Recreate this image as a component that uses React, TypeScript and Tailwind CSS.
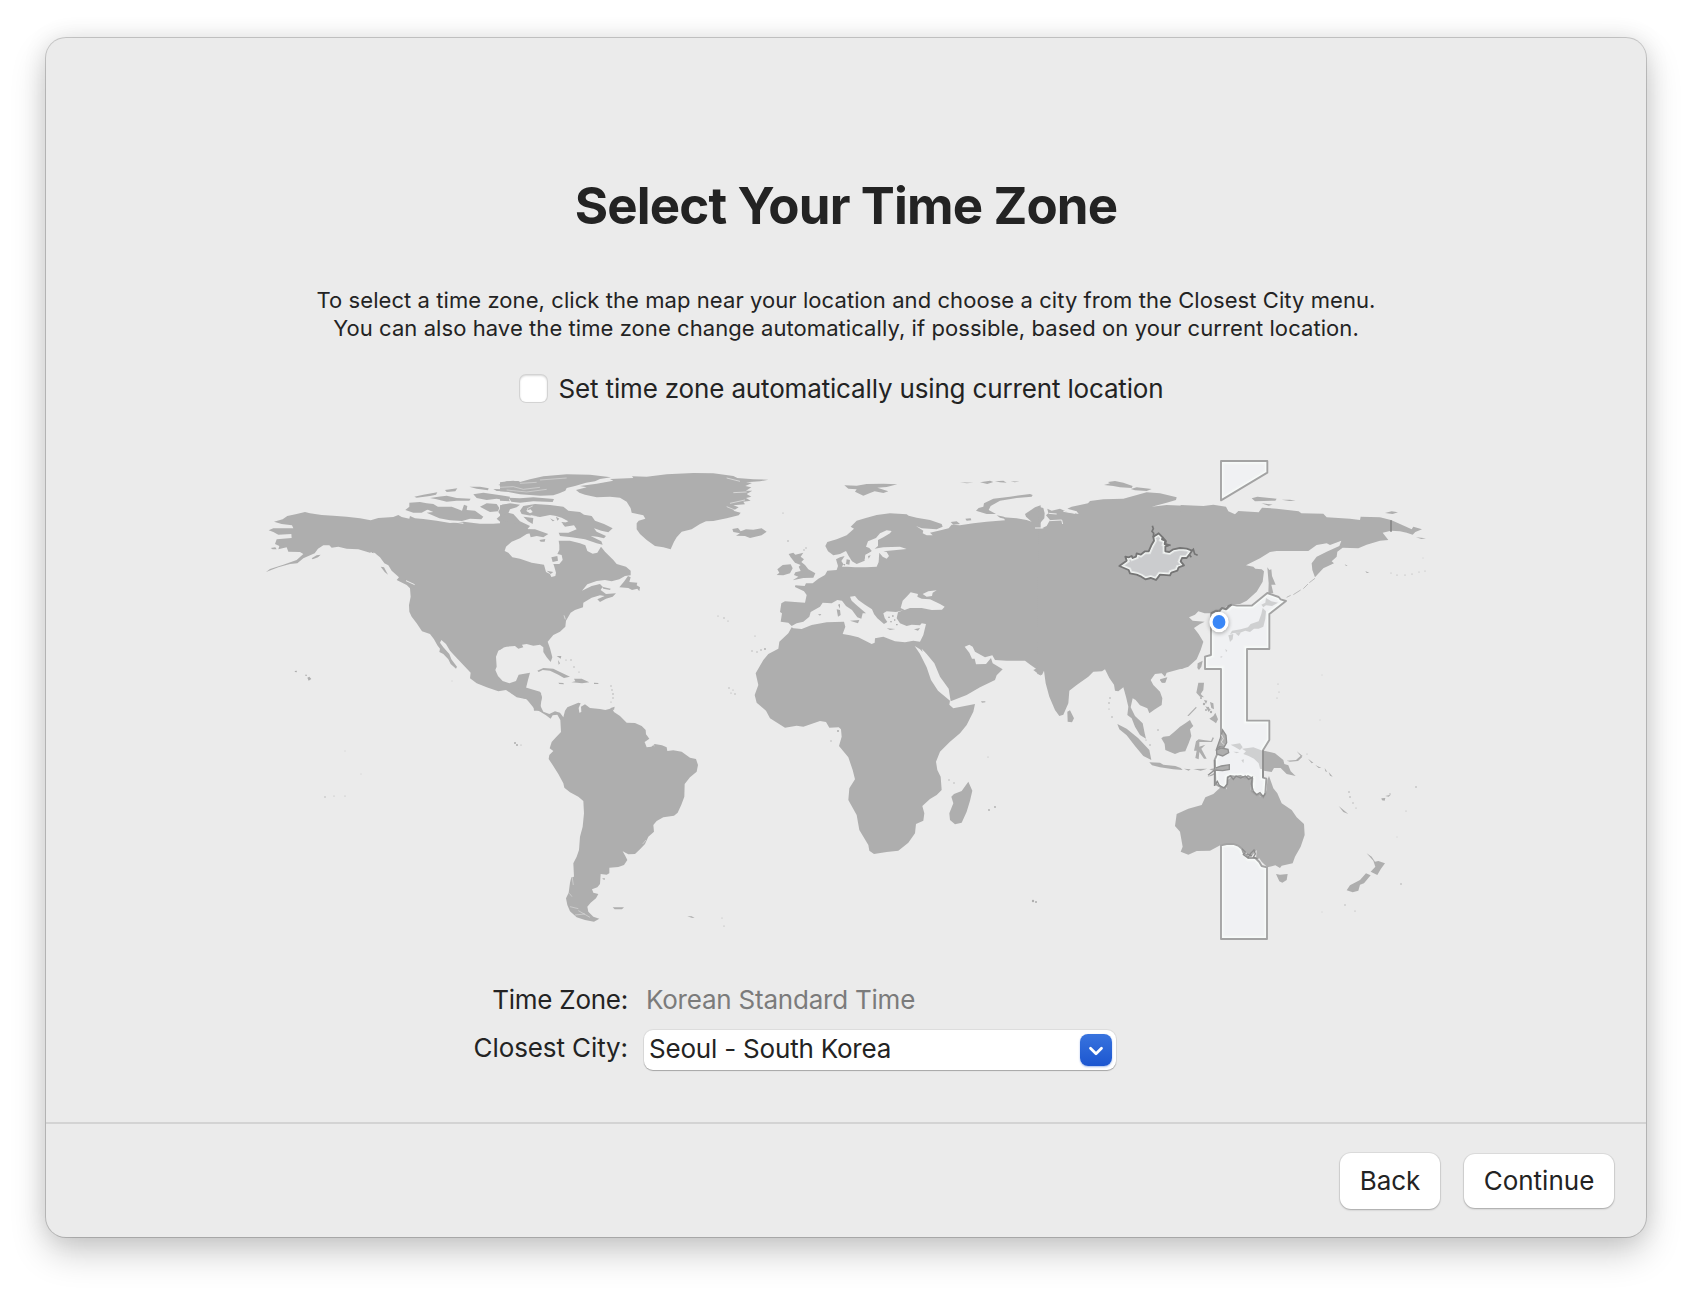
import { ChevronDown } from "lucide-react";

const LAND = "#aeaeae";
const SEA = "#ebebeb";

/* Every group below is drawn in thirds of a map pixel. */
const alaskaToMexico =
  "M72,215 98,208 112,198 140,192 165,186 180,190 215,195 250,197 290,200 330,205 362,211 385,204 430,201 445,195 455,201 478,206 480,198 495,205 520,207 560,212 600,219 640,215 690,221 730,221 760,219 760,594 745,602 738,620 740,650 736,660 744,678 758,693 778,700 798,693 806,674 840,668 834,690 826,722 850,722 873,728 875,745 870,782 852,782 850,765 830,748 800,742 768,720 745,724 710,712 680,700 660,685 662,668 640,645 618,622 600,602 588,582 574,570 570,578 580,592 598,612 604,628 621,650 618,656 602,642 595,628 580,612 568,606 570,596 562,586 552,568 540,552 516,544 500,520 485,500 478,485 477,465 482,440 480,415 470,405 440,390 447,382 425,362 415,346 403,340 390,322 375,310 360,308 325,298 290,296 265,290 245,293 238,286 220,286 204,296 194,310 160,325 142,340 120,342 85,352 48,366 60,357 100,344 140,330 160,312 150,306 115,305 110,292 85,298 88,288 75,282 80,268 125,264 124,252 85,254 70,246 56,241 70,235 130,235 126,226 95,222Z";
const arcticWest =
  "M478,158 510,156 530,160 550,162 566,172 530,180 515,188 490,188 466,180 478,170ZM530,178 560,170 605,170 636,182 642,164 652,168 650,180 675,182 700,200 694,208 660,206 636,213 600,211 568,205 530,188 550,186ZM493,140 520,134 562,127 558,134 540,138 500,143ZM540,144 565,140 590,137 620,144 662,146 658,152 620,152 590,155 560,148ZM585,120 622,115 616,124 590,126ZM658,110 690,110 716,115 714,121 680,116ZM745,105 770,94 805,93 824,104 800,115 770,110ZM690,170 710,160 740,162 748,174 744,184 720,186 708,180ZM756,164 780,162 782,172 762,186 790,192 810,214 840,228 830,240 790,225 760,224 740,206 752,196 745,186ZM670,133 700,128 752,136 780,140 776,152 740,146 710,150 680,144ZM730,117 762,118 770,124 740,123ZM185,325 200,316 212,314 204,322 188,328ZM392,350 402,352 414,374 404,366ZM466,388 494,408 492,414 472,402ZM62,294 76,292 80,298 68,298ZM172,683 178,680 184,687 176,692ZM165,674 171,674 171,677 166,677ZM134,663 141,662 140,667 135,666Z";
const labradorToFlorida =
  "M0,216 10,210 40,222 60,220 85,238 100,240 98,248 80,252 60,265 35,275 18,290 14,303 25,308 37,322 60,326 95,338 132,344 138,366 150,372 154,381 166,378 168,368 163,350 160,342 178,342 188,330 185,315 172,312 178,300 178,285 176,272 210,272 240,280 256,286 262,303 278,311 292,308 303,290 315,305 340,330 350,342 378,350 392,362 392,376 375,378 358,388 335,394 315,390 290,393 262,403 246,422 275,408 300,402 308,410 302,420 318,432 348,430 338,440 318,446 300,456 292,448 314,438 300,436 275,443 250,458 249,472 225,480 212,488 205,500 198,512 196,530 180,545 160,555 143,575 150,595 157,622 152,636 140,622 130,606 130,592 120,584 100,587 80,582 66,584 70,592 55,596 45,588 20,590 5,594 0,600Z";
const baffinGreenland =
  "M60,182 70,168 105,162 150,165 190,170 205,182 240,186 252,194 275,198 285,212 312,222 338,235 325,247 304,242 282,235 290,245 318,258 312,265 292,260 272,258 304,274 308,284 290,280 255,268 215,262 180,258 176,248 205,248 230,238 222,226 195,230 188,222 205,214 185,203 165,197 150,195 120,201 85,196 65,192ZM92,178 78,182 90,190 98,186ZM0,97 40,92 60,96 90,88 130,79 200,73 270,74 333,82 300,87 285,94 258,98 225,108 200,114 196,122 178,130 160,136 120,137 60,133 25,126 0,124ZM26,143 60,145 100,142 162,147 158,156 100,154 60,158 34,155ZM0,140 22,142 30,154 0,152ZM0,166 30,160 60,164 50,172 30,178 25,190 0,200ZM70,200 100,204 98,222 84,214ZM85,238 105,238 145,252 130,262 110,258 92,262ZM118,270 136,267 134,275 122,275ZM184,216 210,218 214,224 192,226ZM228,120 260,112 240,108 290,101 340,92 330,87 400,84 396,79 440,80 500,73 580,69 640,70 700,78 712,84 760,88 805,89 780,94 738,97 756,99 736,108 754,112 738,122 757,122 740,132 754,140 738,144 752,152 730,155 735,163 700,166 716,172 700,182 722,188 716,196 680,205 640,213 618,214 600,222 575,238 545,245 530,262 522,275 512,298 490,292 465,288 440,270 420,252 410,238 410,220 416,212 436,206 430,196 395,188 392,175 380,155 360,143 330,140 290,142 255,134 238,128ZM697,237 714,234 722,244 738,238 760,239 785,235 800,245 785,256 750,264 735,258 708,257 720,250 700,246ZM384,378 374,392 358,412 385,414 396,420 412,416 418,424 420,412 410,406 412,398 388,396 392,382ZM112,662 130,654 160,656 180,666 210,680 192,684 175,674 150,662 128,660 116,666ZM214,697 226,694 222,686 245,686 268,697 246,700 232,698ZM175,698 190,699 192,703 178,702ZM282,698 296,699 294,702 282,702ZM170,618 184,618 182,626ZM174,630 180,640 176,644Z";
const europe =
  "M155,528 145,518 122,515 126,490 120,486 124,460 135,454 195,458 200,435 192,424 165,411 166,406 194,408 198,400 218,400 235,386 255,375 262,362 290,360 294,348 288,328 300,322 314,318 304,333 310,342 306,350 322,350 345,352 378,352 410,350 416,336 414,312 400,300 376,318 374,332 350,342 336,334 326,318 318,303 300,312 280,316 264,304 256,288 262,276 290,268 320,256 342,236 332,230 350,212 375,205 410,195 450,190 500,193 506,197 530,203 570,210 605,222 608,230 590,238 545,235 528,228 550,242 548,250 560,256 578,256 570,248 605,240 626,235 635,224 660,226 700,220 740,215 795,211 790,202 830,205 860,210 875,215 858,200 855,192 885,172 902,166 902,677 880,660 888,656 872,645 855,632 800,632 765,630 757,616 735,622 705,605 698,590 688,584 674,590 688,608 696,626 704,626 708,643 738,642 753,624 758,640 788,658 770,676 765,690 745,700 720,712 680,735 632,754 626,716 600,680 583,640 560,612 545,596 548,606 540,598 524,588 540,612 560,652 573,690 594,722 630,752 628,764 640,775 705,762 700,785 680,825 660,850 630,875 600,905 588,935 592,960 602,980 605,1020 590,1035 570,1047 547,1068 553,1090 550,1112 528,1122 525,1150 505,1178 475,1202 440,1206 402,1212 388,1202 385,1185 358,1140 350,1095 325,1050 328,1015 345,988 338,960 325,922 297,888 305,860 303,838 296,832 268,833 258,816 240,813 190,830 170,827 135,833 90,805 78,782 50,758 44,735 55,705 47,670 70,630 85,612 115,596 118,575 145,550 155,532 160,535 185,537 215,525 260,517 312,515 316,530 308,552 330,556 355,562 395,582 404,578 405,565 430,560 465,574 495,577 520,572 540,575 550,555 558,522 545,520 540,526 515,524 500,528 480,520 470,505 474,487 490,481 482,470 488,452 502,438 512,426 535,432 530,440 560,446 590,456 612,472 600,480 570,480 540,474 510,474 490,481 468,486 440,484 430,490 434,504 442,516 432,522 412,505 402,492 396,478 375,464 355,450 345,438 330,440 335,452 350,466 378,490 368,490 364,506 352,502 336,480 318,468 306,452 292,450 275,460 248,458 240,470 212,486 208,500 190,515 170,520Z";
const europeIsles =
  "M110,375 118,368 112,358 128,345 152,343 158,355 150,370 130,376ZM146,312 160,308 166,314 190,308 182,320 192,328 184,336 195,345 205,358 226,370 220,383 190,384 158,391 175,380 162,375 166,367 182,363 176,350 182,345 165,338 152,322ZM290,478 300,480 302,495 294,500ZM294,464 300,462 300,476ZM330,512 358,510 354,520ZM440,535 466,537 450,540ZM522,538 540,534 534,542ZM234,493 244,492 240,497ZM313,106 350,107 380,102 430,101 472,103 440,111 412,113 445,124 430,129 404,124 392,128 370,137 345,125 350,118 325,116ZM708,182 716,174 730,170 732,160 760,146 810,140 870,132 878,135 875,140 830,144 780,152 752,168 746,180 768,192 740,192ZM770,196 792,200 800,208 780,203ZM676,206 692,205 694,211 680,212ZM632,216 650,214 660,222 640,224ZM440,314 444,322 432,322 426,314ZM685,995 697,1022 690,1052 680,1085 665,1118 645,1123 630,1110 628,1090 640,1060 634,1040 642,1032 665,1023ZM723,754 736,754 736,757 726,758Z";
const asia =
  "M175,170 190,174 194,190 193,205 178,222 165,232 185,235 200,228 210,210 198,196 205,190 202,176 215,182 240,176 262,186 296,192 290,184 262,176 275,170 300,165 324,160 330,153 370,148 430,146 500,127 540,130 590,142 588,150 560,158 515,170 560,165 612,167 612,654 590,660 560,668 555,680 545,670 525,672 512,690 520,705 540,725 547,745 545,765 525,778 508,790 502,775 480,766 467,750 458,745 452,772 465,798 488,820 494,850 498,866 480,855 465,830 455,805 442,795 445,770 438,740 430,712 415,724 405,722 402,704 388,684 375,658 366,664 340,665 325,680 290,705 268,722 265,760 250,794 238,798 225,780 208,740 197,700 192,662 186,675 172,672Z";
const asiaIsles =
  "M372,105 390,100 384,96 405,93 430,98 458,108 455,114 420,112 400,108ZM452,117 470,112 515,117 500,123 465,121ZM540,688 562,682 556,698 544,697ZM653,640 668,632 664,650 657,660 652,654ZM262,785 270,781 282,805 276,817 263,815ZM412,822 440,836 475,865 508,900 514,930 490,918 465,888 440,856 418,838Z";
const siberia =
  "M2,165 70,168 100,164 138,170 145,184 165,193 175,183 236,187 246,173 290,176 356,184 364,190 430,191 440,202 510,206 540,210 542,200 600,202 633,210 660,222 695,238 700,230 726,238 706,246 698,254 680,248 660,244 633,242 608,248 625,270 600,272 560,284 535,295 488,293 472,305 470,320 455,334 462,340 430,355 405,382 397,360 395,340 410,320 440,305 478,288 484,272 450,285 440,280 410,285 385,303 340,303 290,303 270,306 240,325 198,346 220,350 226,356 245,358 252,364 248,395 230,425 200,452 180,462 150,464 125,478 95,490 74,490 55,484 45,494 27,502 38,512 74,515 60,522 42,534 56,552 70,575 62,600 50,628 25,650 2,658ZM262,352 268,360 274,358 276,378 287,404 274,404 280,430 265,430 266,400ZM215,145 232,140 290,146 286,152 225,154ZM305,149 330,149 347,152 328,153ZM244,160 278,164 266,167ZM615,189 635,184 654,187 638,192ZM708,262 738,265 724,267ZM494,343 503,347 498,348ZM556,363 568,369 560,369Z";
const oceania =
  "M272,322 290,328 294,300 302,292 340,290 365,295 362,330 380,345 402,353 410,330 412,300 417,288 430,325 442,340 455,370 485,390 500,412 522,432 524,465 512,500 495,530 488,550 455,557 450,564 436,556 412,562 395,545 388,535 378,540 380,510 362,532 345,515 325,498 300,490 272,495 240,512 200,513 175,524 152,515 158,500 150,455 135,438 140,402 175,386 215,375 226,352 250,342ZM438,582 450,584 473,582 470,600 457,608 448,604ZM710,520 725,530 735,545 745,543 765,550 752,568 742,585 722,575 736,560 730,542ZM708,580 722,586 702,610 690,614 685,632 668,637 650,631 660,616 690,600ZM402,212 435,220 460,240 463,252 475,256 482,274 497,288 470,282 452,264 432,264 425,276 402,272ZM470,242 498,240 514,226 516,232 504,243 480,245ZM500,214 518,228 514,230ZM626,378 655,402 640,396ZM534,236 550,248 545,250ZM556,255 574,264 566,264ZM584,264 592,276 586,274ZM596,276 608,290 600,287ZM754,355 766,354 764,362 756,361ZM766,348 782,344 776,350ZM94,175 100,170 118,168 135,154 150,140 166,130 180,120 186,132 190,138 180,148 184,168 176,190 166,214 150,216 135,222 106,210 104,192ZM58,247 90,248 100,254 136,258 152,264 158,270 130,268 90,262 66,256ZM162,266 182,268 176,272ZM190,267 232,266 212,272ZM238,268 256,264 250,272ZM232,290 262,274 266,278 244,288ZM205,8 222,8 220,30 212,42 222,52 210,50 199,38ZM238,116 250,108 256,98 264,118 258,130 250,124ZM226,78 242,88 236,96ZM240,66 250,70 252,88 244,84ZM222,60 232,62 228,72ZM172,107 198,80 200,83 176,108ZM198,184 206,178 220,180 243,183 248,172 252,174 246,186 222,186 208,186 208,200 226,194 214,206 230,236 222,236 208,216 206,238 196,234 200,212 192,212ZM90,0 108,0 104,8 96,8Z";
const southAmerica =
  "M40,140 90,155 96,172 90,195 100,215 118,222 135,214 150,218 160,232 165,212 172,202 205,188 212,190 206,204 208,218 214,216 213,200 225,193 240,204 270,207 286,210 306,205 312,216 330,228 350,248 375,249 395,258 407,270 408,283 418,296 404,306 410,322 424,320 434,312 456,316 470,322 472,333 490,331 515,335 540,353 558,357 564,375 560,395 540,412 524,432 523,470 514,494 503,518 492,527 460,532 440,543 430,555 432,575 415,590 405,612 390,628 375,642 355,643 338,634 346,648 352,660 342,675 325,681 298,683 298,700 290,704 272,702 270,732 262,742 246,748 250,758 265,762 258,775 242,788 232,800 235,815 250,830 268,836 252,845 225,840 200,832 180,814 172,795 168,775 176,758 180,728 184,712 192,710 190,670 200,650 207,630 210,590 218,560 222,520 220,483 205,470 180,457 163,443 160,430 145,402 128,375 116,357 118,345 130,333 119,325 125,306 138,292 153,276 151,240 142,224 128,226 122,236 108,226 92,216 72,205 50,178 20,168 2,158ZM308,802 322,802 342,802 336,808 314,808ZM532,829 545,829 554,834 545,833ZM276,716 284,714 284,720ZM300,205 314,200 312,210Z";

const zoneTop = "M123,33 262,33 262,68 123,151Z";
const zoneMain =
  "M93,490 115,480 130,474 142,476 155,464 171,467 215,467 262,429 296,441 302,448 318,453 268,492 268,597 201,597 201,812 268,812 268,870 249,901 249,983 259,986 256,1030 250,1043 240,1034 230,1036 215,1024 217,985 204,978 195,984 182,978 166,980 150,978 143,982 142,1002 136,1014 124,1012 110,1004 106,992 104,930 115,905 123,880 123,657 75,657 75,620 93,615Z";
const zoneBottom =
  "M123,1186 140,1182 160,1182 176,1188 186,1196 190,1208 198,1214 206,1224 226,1224 238,1236 245,1248 261,1252 261,1467 123,1467Z";
const zoneIrkutsk =
  "M418,348 440,332 436,320 446,322 455,318 458,324 468,320 470,310 482,314 495,304 506,304 514,286 522,272 520,260 530,254 536,250 548,262 546,268 556,272 554,282 566,286 556,290 556,304 568,306 580,298 600,294 620,296 636,302 628,314 620,324 606,324 602,334 612,346 596,352 592,362 574,368 570,376 540,374 534,382 528,390 512,384 496,388 484,380 470,374 450,370 446,360Z";

const specks: [number, number, number][] = [
  [718, 616, 0.6], [724, 618, 0.7], [728, 621, 0.6], [755, 636, 0.6], [752, 651, 0.7], [757, 652, 0.7],
  [761, 650, 0.8], [765, 649, 0.9], [729, 688, 0.7], [733, 690, 0.6], [735, 694, 0.7], [731, 693, 0.6],
  [611, 686, 0.7], [612, 690, 0.7], [613, 694, 0.8], [613, 698, 0.7], [611, 702, 0.6], [571, 660, 0.7],
  [574, 667, 0.7], [579, 672, 0.6], [566, 660, 0.6], [515, 743, 1], [517, 745, 1], [521, 745, 0.6],
  [838, 731, 1], [831, 741, 0.7], [949, 780, 0.7], [954, 783, 0.7], [989, 810, 0.9], [995, 807, 0.9],
  [988, 757, 0.5], [1033, 901, 1.2], [1036, 902, 1], [664, 952, 0.5], [724, 926, 0.6], [722, 918, 0.5],
  [325, 797, 0.7], [334, 796, 0.5], [345, 796, 0.5], [345, 751, 0.4], [361, 774, 0.4], [452, 681, 0.4],
  [788, 541, 0.8], [783, 513, 0.6], [806, 548, 0.7], [804, 550, 0.7], [1401, 884, 0.8], [1345, 905, 0.7],
  [1355, 911, 0.6], [1416, 787, 0.8], [1406, 811, 0.5], [1397, 837, 0.4], [1322, 912, 0.4], [1322, 675, 0.4],
  [1278, 684, 0.5], [1279, 692, 0.5], [1277, 698, 0.5], [1349, 792, 0.8], [1350, 797, 0.8], [1353, 803, 0.7],
  [1356, 808, 0.6], [1390, 794, 0.7], [1158, 730, 0.8], [1150, 745, 0.8], [1146, 740, 0.6], [1391, 573, 0.5],
  [1397, 575, 0.6], [1405, 575, 0.6], [1412, 574, 0.6], [1419, 572, 0.5], [1425, 571, 0.5], [1423, 558, 0.4],
  [1110, 698, 0.8], [1109, 703, 0.8], [1109, 709, 0.6], [1112, 717, 0.8], [1204, 704, 1.2], [1208, 708, 1.2],
  [1211, 712, 1.2], [1206, 710, 1], [1212, 705, 1], [1201, 698, 1], [1307, 754, 0.5], [1320, 720, 0.4],
];

type ZoneProps = { id: string; d: string; edge?: string; fill?: string; glow?: number };

function ZoneShape({ id, d, edge = "#a3a3a3", fill = "#f0f1f3", glow = 22 }: ZoneProps) {
  return (
    <g>
      <clipPath id={id}>
        <path d={d} />
      </clipPath>
      <path d={d} fill={fill} />
      <g clipPath={`url(#${id})`}>
        <path d={d} fill="none" stroke="#f4f6f5" strokeOpacity={0.6} strokeWidth={glow} />
        <path d={d} fill="none" stroke="#f8faf9" strokeOpacity={0.85} strokeWidth={glow * 0.65} />
      </g>
      <path d={d} fill="none" stroke={edge} strokeWidth={5.6} strokeLinejoin="round" />
    </g>
  );
}

function TimeZoneMap() {
  return (
    <svg className="mt-[45px] block h-[500px] w-[1180px] shrink-0" viewBox="256 450 1180 500" fill={LAND} aria-label="World map">
      <g transform="translate(250 450) scale(0.33333)">
        <path d={alaskaToMexico} />
        <path d={arcticWest} />
        <path
          d="M362,306 L380,326 392,336 M372,308 L400,340 M468,392 L494,404 M700,212 L720,206 735,215 M600,214 L640,220"
          fill="none"
          stroke={SEA}
          strokeWidth={3}
        />
      </g>
      <g transform="translate(500 450) scale(0.33333)">
        <path d={labradorToFlorida} />
        <path d={baffinGreenland} />
        <g fill="none" stroke={SEA} strokeWidth={2}>
          <path d="M0,112 L40,110 70,118 120,112 M20,120 L80,126 140,118 M60,100 L110,97 M120,90 L200,84" strokeOpacity={0.7} />
          <path d="M85,186 L82,176 98,168 M680,84 L720,94 M680,170 L715,184 M690,160 L735,150 M700,128 L740,126 M196,508 L192,496 M92,196 L110,200" />
        </g>
        <path d="M154,322 172,318 174,332 158,336ZM306,410 332,416 330,420 310,416ZM140,362 160,366 152,372ZM150,205 164,212 158,214ZM168,200 178,206 172,212Z" />
      </g>
      <g transform="translate(740 450) scale(0.33333)">
        <path d={europe} />
        <path d={europeIsles} />
        <path
          fill={SEA}
          d="M378,290 384,274 408,264 420,250 440,241 455,243 450,250 430,262 414,270 414,288 404,296 430,292 480,290 500,297 470,300 430,304 440,306 447,318 440,326 428,320 418,308 416,330 410,346 396,340 380,336 374,330 376,314 396,304 388,294ZM488,452 504,436 512,427 534,432 532,440 545,446 570,448 600,462 614,470 606,479 575,480 545,474 510,474 494,480 482,474ZM548,432 565,424 590,421 578,428 576,438 560,440Z"
        />
        <path d="M320,328 330,330 328,344 318,342ZM308,342 316,342 314,347ZM384,318 392,316 386,326Z" />
        <path d="M446,490 452,494 M444,500 h6 v3 h-6Z M456,496 h5 v4 h-5Z M462,508 h4 v4 h-4Z M450,514 h6 v3 h-6Z M468,522 h5 v4 h-5Z" />
      </g>
      <g transform="translate(510 640) scale(0.33333)">
        <path d={southAmerica} />
        <path
          d="M404,308 L420,308 434,318 M186,708 L190,735 M178,760 L186,770 M180,800 L205,806 M195,825 L225,822 M205,812 L240,832 M408,600 L398,612"
          fill="none"
          stroke={SEA}
          strokeWidth={2}
          strokeOpacity={0.7}
        />
      </g>
      <g transform="translate(980 450) scale(0.33333)">
        <path d={asia} />
        <path d={asiaIsles} />
        <path
          d="M208,212 L245,210 248,222 M206,190 L230,192 M190,234 L165,234 M250,184 L285,190"
          fill="none"
          stroke={SEA}
          strokeWidth={3}
        />
        <path d="M0,97 30,92 40,96 22,102ZM45,94 70,92 80,98 60,97ZM92,94 118,95 104,97ZM-60,97 -20,98 -40,100Z" />
      </g>
      <g transform="translate(1180 450) scale(0.33333)">
        <path d={siberia} />
        <path d="M405,385 L388,398 M384,402 L370,416 M362,420 L340,434 M332,436 L320,442" fill="none" stroke="#bcbcbc" strokeWidth={3} />
        <path d="M633,211 V245" stroke="#858585" strokeWidth={5} />
      </g>
      <g transform="translate(1130 680) scale(0.33333)">
        <path d={oceania} />
      </g>
      {specks.map(([x, y, r]) => (
        <circle key={`${x}-${y}`} cx={x} cy={y} r={r} />
      ))}

      <g transform="translate(1180 450) scale(0.33333)">
        <ZoneShape id="zone-top" d={zoneTop} />
        <ZoneShape id="zone-main" d={zoneMain} />
        <ZoneShape id="zone-bottom" d={zoneBottom} />
        <g fill="#cfd0d1">
          <path d="M244,464 256,458 258,444 274,454 294,458 276,468 258,466 250,472ZM248,474 258,484 256,506 250,530 236,536 222,536 210,546 196,542 180,548 160,549 150,553 156,542 182,538 204,532 212,522 236,514 244,492ZM145,556 160,552 158,568 150,576ZM166,550 182,548 176,558ZM136,596 142,602 138,606ZM122,618 128,620 122,624Z" />
          <path d="M152,884 180,880 188,892 180,900 166,892ZM186,896 204,894 220,892 248,902 248,958 240,956 236,940 222,926 206,918 190,912 198,904ZM184,930 192,928 190,940ZM160,905 178,906 170,910Z" />
        </g>
        <path d="M93,490 L108,482 118,484 126,474 138,478 146,468 155,464" fill="none" stroke="#848484" strokeWidth={6} strokeLinejoin="round" />
        <path d="M249,901 V983 M104,930 V1008" fill="none" stroke="#8c8c8c" strokeWidth={5} />
        <g fill={LAND} stroke="#909090" strokeWidth={4}>
          <path d="M128,840 138,856 140,878 132,892 118,890 108,902 120,868Z" />
          <path d="M110,900 124,894 144,898 146,908 128,918 110,912Z" />
          <path d="M108,954 124,948 148,944 148,958 128,962 104,960 84,976" />
        </g>
        <path d="M124,854 L130,866 124,876 132,884" fill="none" stroke="#dedede" strokeWidth={3} />
        <path
          d="M106,1004 L112,994 118,1006 132,1014 142,1002 143,982 152,978 160,988 168,978 182,984 196,978 206,988 217,982 214,1002 220,1024 230,1034 240,1028 250,1040 256,1030"
          fill="none"
          stroke="#8c8c8c"
          strokeWidth={4}
        />
        <path d="M186,1196 L196,1206 190,1214 204,1224 212,1210 222,1200 226,1212 220,1222 232,1226 M200,1212 L216,1218" fill="none" stroke="#8c8c8c" strokeWidth={4} />
      </g>
      <g transform="translate(980 450) scale(0.33333)">
        <ZoneShape id="zone-irkutsk" d={zoneIrkutsk} edge="#757575" fill="#cbccce" glow={17} />
        <path
          d="M517,227 L520,236 516,244 521,250 520,262 M548,262 L558,274 556,282 572,286 M636,302 L640,298 644,312 653,316 M628,314 L634,322"
          fill="none"
          stroke="#757575"
          strokeWidth={5}
        />
      </g>
      <ellipse className="drop-shadow-[0_1px_2px_rgba(0,0,0,0.35)]" cx={1219} cy={622} rx={9.7} ry={10.3} fill="#ffffff" />
      <ellipse cx={1219} cy={622} rx={6.4} ry={7} fill="#3a87f7" />
    </svg>
  );
}

function ZoneForm() {
  return (
    <div className="mt-[34px] grid w-full grid-cols-[582px_472px] gap-x-4 text-[26px] leading-8 whitespace-nowrap">
      <div className="h-[46px] text-right tracking-[-0.25px]">Time Zone:</div>
      <div className="h-[46px] pl-[2px] leading-[31px] tracking-[-0.22px] text-[#7b7b7b]">Korean Standard Time</div>
      <div className="pt-[2px] text-right tracking-[-0.1px]">Closest City:</div>
      <button className="flex h-10 items-center justify-between rounded-[9px] bg-white pr-1 pl-[5px] shadow-[0_0_0_1px_rgba(0,0,0,0.06),0_1px_1px_rgba(0,0,0,0.25)]">
        <span className="pb-[3px] tracking-[-0.2px]">Seoul - South Korea</span>
        <span className="flex size-8 items-center justify-center rounded-[8px] bg-linear-to-b from-[#3873de] to-[#1c56d0] text-white shadow-[0_1px_2px_rgba(30,90,210,0.4)]">
          <ChevronDown className="mt-px size-[22px]" strokeWidth={3} />
        </span>
      </button>
    </div>
  );
}

export default function App() {
  return (
    <div className="h-[1292px] w-[1692px] overflow-hidden bg-white pt-[38px] pl-[46px] font-['Inter',sans-serif] text-[#232323]">
      <main className="flex h-[1199px] w-[1600px] flex-col rounded-[20px] bg-[#ebebeb] shadow-[0_0_0_1px_rgba(0,0,0,0.18),0_16px_36px_rgba(0,0,0,0.2),0_0_24px_rgba(0,0,0,0.1)]">
        <section className="flex h-[1084px] shrink-0 flex-col items-center">
          <h1 className="mt-[137px] h-[62px] text-[51px] leading-[62px] font-bold tracking-[-0.85px] whitespace-nowrap">
            Select Your Time Zone
          </h1>
          <p className="mt-[49px] text-center text-[22px] leading-7 tracking-[0.07px] whitespace-nowrap">
            To select a time zone, click the map near your location and choose a city from the Closest City menu.
            <br />
            You can also have the time zone change automatically, if possible, based on your current location.
          </p>
          <label className="mt-[31px] mr-[9px] flex h-8 items-center gap-3 text-[26px] leading-8 tracking-[-0.16px] whitespace-nowrap">
            <span className="mb-[2px] size-[27px] rounded-md bg-white shadow-[0_0_0_1px_rgba(0,0,0,0.1),inset_0_1px_2px_rgba(0,0,0,0.15)]" />
            Set time zone automatically using current location
          </label>
          <TimeZoneMap />
          <ZoneForm />
        </section>
        <footer className="flex grow justify-end gap-6 border-t-2 border-[#d3d3d3] pt-[29px] pr-8 text-[26px]">
          <button className="h-14 w-[100px] rounded-[11px] bg-white pb-[2px] shadow-[0_0_0_1px_rgba(0,0,0,0.06),0_1px_2px_rgba(0,0,0,0.25)]">
            Back
          </button>
          <button className="mt-px h-[54px] w-[150px] rounded-[11px] bg-white pb-[2px] shadow-[0_0_0_1px_rgba(0,0,0,0.06),0_1px_2px_rgba(0,0,0,0.25)]">
            Continue
          </button>
        </footer>
      </main>
    </div>
  );
}
